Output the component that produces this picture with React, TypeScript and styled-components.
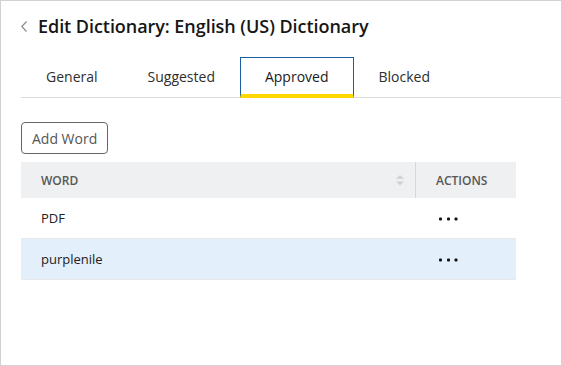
import React from "react";
import styled, { createGlobalStyle } from "styled-components";

const Global = createGlobalStyle`
  html, body { margin: 0; padding: 0; background: #fff; }
  body { font-family: "Open Sans", "Liberation Sans", sans-serif; }
  * { box-sizing: border-box; }
`;

const Frame = styled.div`
  width: 562px;
  height: 366px;
  border: 1px solid #d2d2d2;
  padding: 13px 0 0 20px;
  background: #fff;
  overflow: hidden;
`;

const TitleRow = styled.div`
  display: flex;
  align-items: center;
  gap: 11px;
  height: 24px;
`;

const BackButton = styled.button`
  display: flex;
  align-items: center;
  justify-content: center;
  width: 6px;
  height: 24px;
  padding: 0;
  border: none;
  background: none;
  cursor: pointer;
`;

const Title = styled.h1`
  margin: 0;
  font-size: 18px;
  line-height: 24px;
  font-weight: 600;
  letter-spacing: -0.05px;
  color: #161616;
`;

const TabList = styled.div`
  display: flex;
  margin-top: 19px;
  border-bottom: 1px solid #dcdcdc;
`;

const Tab = styled.button<{ $active?: boolean }>`
  height: 41px;
  margin-bottom: -1px;
  padding: 1px 24px 0;
  font-family: inherit;
  font-size: 14px;
  color: ${(p) => (p.$active ? "#1a1a1a" : "#2e2e2e")};
  background: ${(p) => (p.$active ? "#fff" : "transparent")};
  border: 1px solid ${(p) => (p.$active ? "#1c5ea6" : "transparent")};
  border-bottom: 4px solid ${(p) => (p.$active ? "#ffd800" : "transparent")};
  cursor: pointer;
`;

const Content = styled.div`
  width: 495px;
  padding-top: 24px;
`;

const AddButton = styled.button`
  height: 32px;
  padding: 0 10px;
  font-family: inherit;
  font-size: 14px;
  color: #555;
  background: #fff;
  border: 1px solid #666;
  border-radius: 4px;
  cursor: pointer;
`;

const Table = styled.div`
  margin-top: 8px;
  display: grid;
  grid-template-columns: 394px 101px;
`;

const HeadCell = styled.div<{ $divider?: boolean }>`
  height: 36px;
  display: flex;
  align-items: center;
  justify-content: space-between;
  padding: 0 11px 0 20px;
  background: #eff0f1;
  font-size: 12px;
  font-weight: 600;
  color: #575757;
  text-transform: uppercase;
  border-left: ${(p) => (p.$divider ? "1px solid #d8d8d8" : "none")};
`;

const Cell = styled.div<{ $selected?: boolean }>`
  height: 41px;
  display: flex;
  align-items: center;
  padding: 0 20px;
  font-size: 13px;
  color: #222;
  background: ${(p) => (p.$selected ? "#e3effb" : "#fff")};
  border-bottom: 1px solid #e6e8ea;
`;

const DotsButton = styled.button`
  display: flex;
  align-items: center;
  padding: 2px 0 0 4px;
  border: none;
  background: none;
  cursor: pointer;
`;

const Chevron = () => (
  <svg width="6" height="11" viewBox="0 0 6 11">
    <polyline points="5.5,0.5 0.8,5.5 5.5,10.5" fill="none" stroke="#8a8a8a" strokeWidth="1.2" />
  </svg>
);

const SortIcon = () => (
  <svg width="8" height="11" viewBox="0 0 8 11">
    <polygon points="4,0 8,4 0,4" fill="#d0d2d4" />
    <polygon points="0,6.5 8,6.5 4,10.5" fill="#d0d2d4" />
  </svg>
);

const Dots = () => (
  <svg width="19" height="4" viewBox="0 0 19 4">
    <rect x="0" y="0.5" width="3" height="3" rx="1" fill="#111" />
    <rect x="8" y="0.5" width="3" height="3" rx="1" fill="#111" />
    <rect x="15.5" y="0.5" width="3" height="3" rx="1" fill="#111" />
  </svg>
);

const tabs = ["General", "Suggested", "Approved", "Blocked"];
const words = ["PDF", "purplenile"];

export default function App() {
  return (
    <>
      <Global />
      <Frame>
        <TitleRow>
          <BackButton aria-label="Back">
            <Chevron />
          </BackButton>
          <Title>Edit Dictionary: English (US) Dictionary</Title>
        </TitleRow>
        <TabList>
          {tabs.map((t) => (
            <Tab key={t} $active={t === "Approved"}>
              {t}
            </Tab>
          ))}
        </TabList>
        <Content>
          <AddButton>Add Word</AddButton>
          <Table>
            <HeadCell>
              <span>Word</span>
              <SortIcon />
            </HeadCell>
            <HeadCell $divider>Actions</HeadCell>
            {words.map((w, i) => (
              <React.Fragment key={w}>
                <Cell $selected={i === 1}>{w}</Cell>
                <Cell $selected={i === 1}>
                  <DotsButton aria-label="Actions">
                    <Dots />
                  </DotsButton>
                </Cell>
              </React.Fragment>
            ))}
          </Table>
        </Content>
      </Frame>
    </>
  );
}
